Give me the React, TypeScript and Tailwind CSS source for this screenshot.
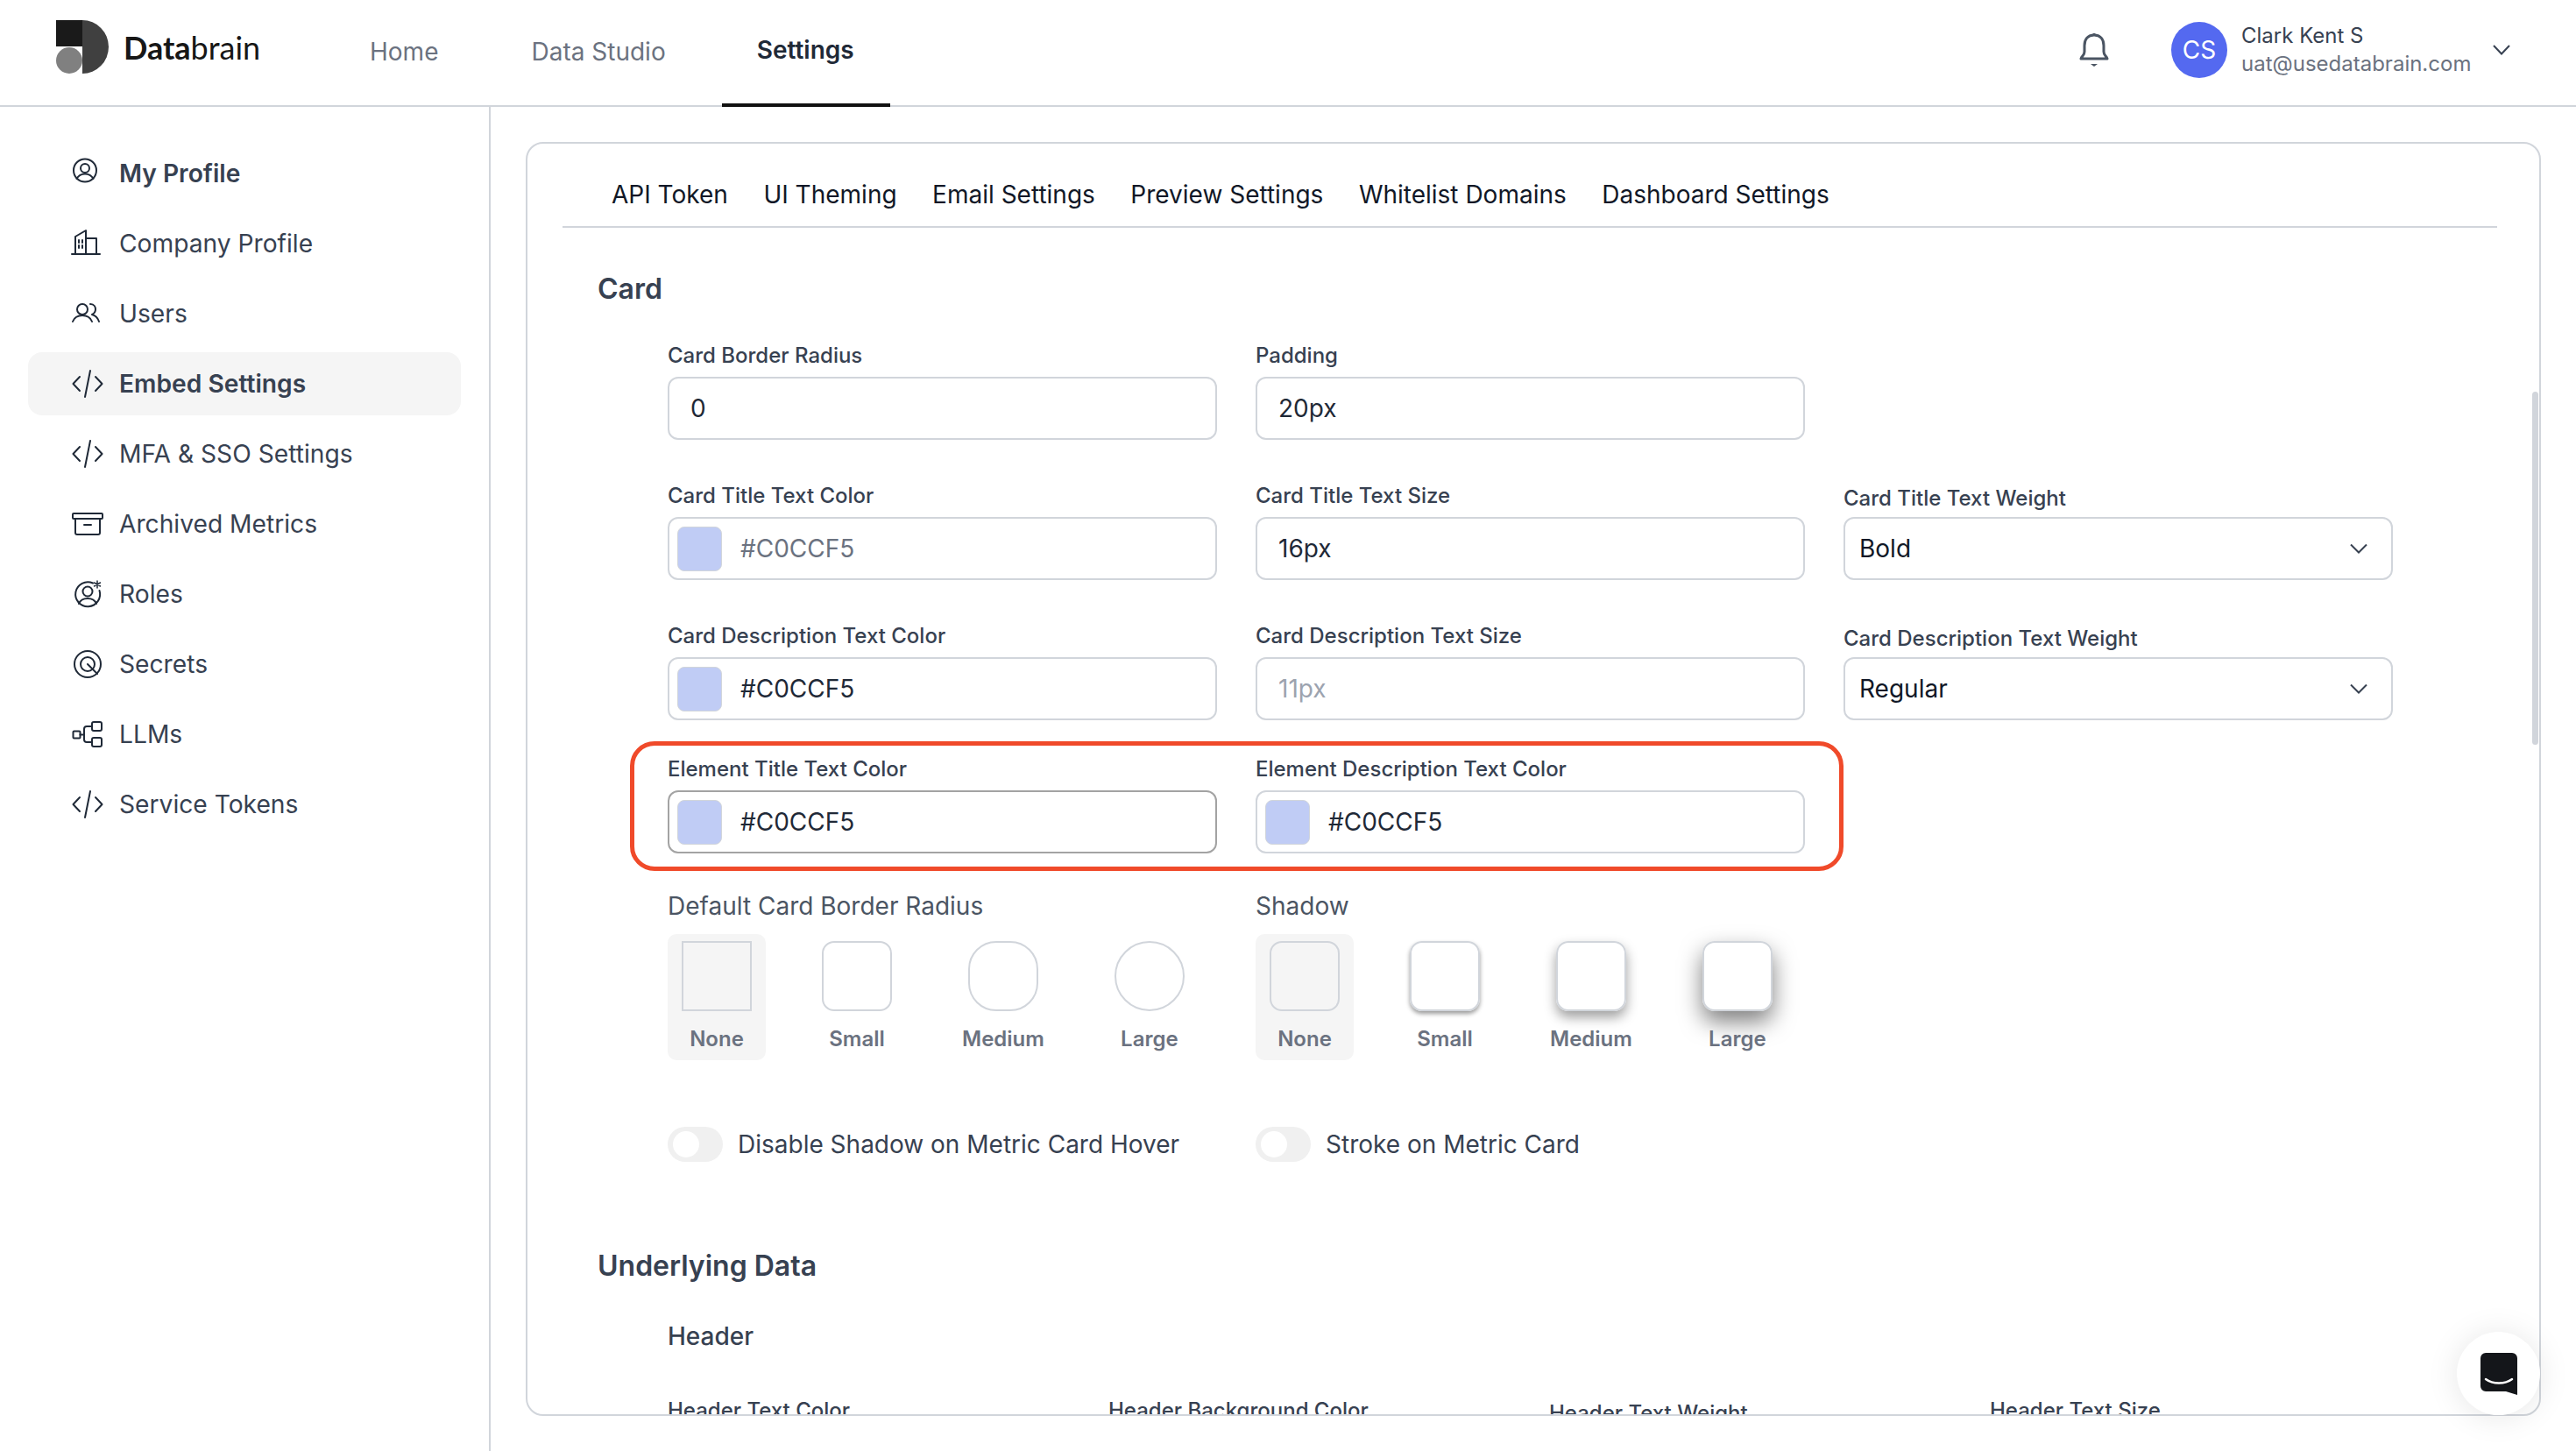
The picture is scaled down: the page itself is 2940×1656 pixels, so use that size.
import type { ReactNode } from 'react';

const iconPaths: Record<string, ReactNode> = {
  profile: (
    <>
      <circle cx="15" cy="12.5" r="13" />
      <circle cx="15" cy="10" r="5" />
      <path d="M5.5 22C8 17.5 11 16.5 15 16.5S22 17.5 24.5 22" />
    </>
  ),
  company: (
    <>
      <path d="M0 28H32M4 28V8L16 1V28M16 10H28V28" />
      <path d="M8 12v3M12 12v3M8 18v3M12 18v3" />
    </>
  ),
  users: (
    <>
      <circle cx="12" cy="11" r="6" />
      <path d="M1 25C3 20 7 18 12 18S21 20 23 25" />
      <path d="M21 5C26 5 27 9 27 11C27 14 25 16 23 17C27 18 30 22 31 25" />
    </>
  ),
  code: <path d="M9 8L1.5 16L9 24M27 8L34.5 16L27 24M21 1L15 31" />,
  archive: (
    <>
      <rect x="1" y="4" width="34" height="6" rx="1" />
      <path d="M4 10V26a2 2 0 0 0 2 2H30a2 2 0 0 0 2-2V10M14 17H22" />
    </>
  ),
  roles: (
    <>
      <path d="M24 3.5A14 14 0 1 0 31.5 12" />
      <circle cx="18" cy="13" r="5.5" />
      <path d="M8 27C10 22 14 21 18 21S26 22 28 27" />
      <path d="M29 1V9M25.5 3L32.5 7M25.5 7L32.5 3" strokeWidth="1.5" />
    </>
  ),
  secrets: (
    <>
      <circle cx="18" cy="16" r="15" />
      <circle cx="18" cy="16" r="8" />
      <path d="M18 16L29 27" />
    </>
  ),
  llms: (
    <>
      <rect x="1.5" y="12.5" width="8" height="8" rx="1" />
      <rect x="23" y="2" width="11" height="10" rx="2" />
      <rect x="23" y="20" width="11" height="10" rx="2" />
      <path d="M9.5 16.5H14M23 7H17a3 3 0 0 0-3 3V22a3 3 0 0 0 3 3H23" />
    </>
  ),
};

const sidebarItems = [
  { label: 'My Profile', icon: 'profile', bold: true },
  { label: 'Company Profile', icon: 'company' },
  { label: 'Users', icon: 'users' },
  { label: 'Embed Settings', icon: 'code', bold: true, active: true },
  { label: 'MFA & SSO Settings', icon: 'code' },
  { label: 'Archived Metrics', icon: 'archive' },
  { label: 'Roles', icon: 'roles' },
  { label: 'Secrets', icon: 'secrets' },
  { label: 'LLMs', icon: 'llms' },
  { label: 'Service Tokens', icon: 'code' },
];

const settingsTabs = [
  'API Token',
  'UI Theming',
  'Email Settings',
  'Preview Settings',
  'Whitelist Domains',
  'Dashboard Settings',
];

function FieldLabel({ children, low }: { children: ReactNode; low?: boolean }) {
  return (
    <div
      className={`h-[40px] text-[24px] leading-[32px] font-medium text-[#374151] ${low ? 'pt-[3px]' : ''}`}
    >
      {children}
    </div>
  );
}

function TextField({ label, value, muted }: { label: string; value: string; muted?: boolean }) {
  return (
    <div>
      <FieldLabel>{label}</FieldLabel>
      <div
        className={`flex h-[72px] items-center rounded-[12px] border-2 border-[#d1d5db] pl-[24px] text-[28px] ${muted ? 'text-[#9ca3af]' : 'text-[#1f2937]'}`}
      >
        {value}
      </div>
    </div>
  );
}

function ColorField({
  label,
  muted,
  dark,
}: {
  label: string;
  muted?: boolean;
  dark?: boolean;
}) {
  return (
    <div>
      <FieldLabel>{label}</FieldLabel>
      <div
        className={`flex h-[72px] items-center rounded-[12px] border-2 pl-[9px] text-[28px] ${dark ? 'border-[#a3a3a3]' : 'border-[#d1d5db]'} ${muted ? 'text-[#6b7280]' : 'text-[#1f2937]'}`}
      >
        <span className="mr-[21px] h-[51px] w-[51px] rounded-[8px] border border-[#d1d5db] bg-[#c0ccf5]" />
        #C0CCF5
      </div>
    </div>
  );
}

function SelectField({ label, value }: { label: string; value: string }) {
  return (
    <div>
      <FieldLabel low>{label}</FieldLabel>
      <div className="flex h-[72px] items-center justify-between rounded-[12px] border-2 border-[#d1d5db] pr-[27px] pl-[16px] text-[28px] text-[#111827]">
        {value}
        <svg width="20" height="12" viewBox="0 0 20 12" fill="none" stroke="#374151" strokeWidth="2">
          <path d="M1 1.5L10 10.5L19 1.5" />
        </svg>
      </div>
    </div>
  );
}

const radiusOptions = [
  { label: 'None', box: 'rounded-none bg-[#f5f5f5]', selected: true },
  { label: 'Small', box: 'rounded-[14px]' },
  { label: 'Medium', box: 'rounded-[32px]' },
  { label: 'Large', box: 'rounded-full' },
];

const shadowOptions = [
  { label: 'None', box: 'rounded-[14px] bg-[#f5f5f5]', selected: true },
  { label: 'Small', box: 'rounded-[14px] shadow-[0_3px_5px_rgba(0,0,0,0.4)]' },
  { label: 'Medium', box: 'rounded-[14px] shadow-[0_7px_14px_rgba(0,0,0,0.38)]' },
  { label: 'Large', box: 'rounded-[14px] shadow-[0_12px_26px_rgba(0,0,0,0.5)]' },
];

function OptionGroup({
  title,
  options,
}: {
  title: string;
  options: { label: string; box: string; selected?: boolean }[];
}) {
  return (
    <div>
      <div className="text-[28px] leading-[36px] text-[#4b5563]">{title}</div>
      <div className="mt-[14px] flex gap-[48px]">
        {options.map((o) => (
          <div
            key={o.label}
            className={`flex h-[144px] flex-col items-center rounded-[10px] px-[16px] pt-[8px] ${o.selected ? 'bg-[#f5f5f5]' : ''}`}
          >
            <div className={`h-[80px] w-[80px] border-2 border-[#d1d5db] ${o.box}`} />
            <div className="mt-[16px] text-[24px] leading-[32px] font-semibold text-[#6b7280]">
              {o.label}
            </div>
          </div>
        ))}
      </div>
    </div>
  );
}

function Toggle({ label }: { label: string }) {
  return (
    <div className="flex items-center gap-[17px]">
      <div className="flex h-[40px] w-[63px] items-center rounded-full bg-[#f0f0f0] pl-[6px]">
        <div className="h-[30px] w-[30px] rounded-full bg-white" />
      </div>
      <span className="text-[28px] text-[#374151]">{label}</span>
    </div>
  );
}

export default function App() {
  return (
    <div className="h-[1656px] w-[2940px] overflow-hidden bg-white font-['Inter',sans-serif]">
      <header className="flex h-[122px] items-start border-b-2 border-[#d1d5db]">
        <svg className="mt-[23px] ml-[64px]" width="60" height="61" viewBox="0 0 60 61">
          <path d="M30 0A30 30.5 0 0 1 30 61Z" fill="#404040" />
          <rect width="30" height="30" fill="#1a1a1a" />
          <circle cx="15" cy="46" r="15" fill="#808080" />
        </svg>
        <div className="mt-[31px] ml-[17px] w-[241px] font-['Lato',sans-serif] text-[36px] leading-[46px] text-[#171717]">
          <span className="font-bold">Data</span>brain
        </div>
        <nav className="flex text-[28px]">
          <a className="mr-[26px] flex h-[116px] items-center px-[40px] pt-[2px] text-[#6b7280]">Home</a>
          <a className="mr-[24px] flex h-[116px] items-center px-[40px] pt-[2px] text-[#6b7280]">Data Studio</a>
          <a className="flex h-[122px] items-center border-b-4 border-[#111111] pr-[41px] pb-[5px] pl-[40px] font-semibold text-[#1f2937]">
            Settings
          </a>
        </nav>
        <div className="ml-auto flex h-[120px] items-center pr-[75px] pb-[6px]">
          <svg width="34" height="40" viewBox="0 0 34 40" fill="none" stroke="#4b5563" strokeWidth="3">
            <path d="M17 1V3M17 3C9 3 6 9 6 15V22C6 26 3 27 2 30H32C31 27 28 26 28 22V15C28 9 25 3 17 3Z" strokeLinejoin="round" />
            <path d="M13 36H21L17 39Z" fill="#4b5563" stroke="none" />
          </svg>
          <div className="mr-[16px] ml-[71px] flex h-[64px] w-[64px] items-center justify-center rounded-full bg-[#5469f0] text-[28px] text-white">
            CS
          </div>
          <div className="w-[266px]">
            <div className="text-[24px] leading-[32px] text-[#374151]">Clark Kent S</div>
            <div className="text-[24px] leading-[32px] text-[#6b7280]">uat@usedatabrain.com</div>
          </div>
          <svg className="ml-[21px]" width="20" height="12" viewBox="0 0 20 12" fill="none" stroke="#374151" strokeWidth="2">
            <path d="M1 1L10 10.5L19 1" />
          </svg>
        </div>
      </header>

      <div className="flex h-[1534px]">
        <aside className="w-[560px] shrink-0 border-r-2 border-[#d1d5db] pt-[40px] pl-[32px]">
          <div className="flex flex-col gap-[8px]">
            {sidebarItems.map((item) => (
              <div
                key={item.label}
                className={`flex h-[72px] w-[494px] items-center gap-[18px] rounded-[16px] pl-[50px] text-[28.2px] text-[#374151] ${item.active ? 'bg-[#f5f5f5]' : ''} ${item.bold ? 'font-semibold' : ''}`}
              >
                <svg
                  className="overflow-visible"
                  width="36"
                  height="32"
                  viewBox="0 0 36 32"
                  fill="none"
                  stroke="#1f2937"
                  strokeWidth="2"
                  strokeLinecap="round"
                  strokeLinejoin="round"
                >
                  {iconPaths[item.icon]}
                </svg>
                {item.label}
              </div>
            ))}
          </div>
        </aside>

        <main className="relative flex-1 pt-[40px] pl-[40px]">
          <div className="relative h-[1454px] w-[2300px] overflow-hidden rounded-[20px] border-2 border-[#d1d5db]">
            <div className="mr-[48px] ml-[40px] flex gap-[40.5px] border-b-2 border-[#d1d5db] pt-[38px] pb-[16px] pl-[56px] text-[28px] leading-[40px] text-[#111827]">
              {settingsTabs.map((t) => (
                <span key={t}>{t}</span>
              ))}
            </div>

            <section className="pl-[80px]">
              <h2 className="mt-[50px] text-[32px] leading-[40px] font-semibold text-[#374151]">Card</h2>
              <div className="mt-[40px] pl-[80px]">
                <div className="grid grid-cols-[repeat(3,627px)] gap-x-[44px] gap-y-[48px]">
                  <TextField label="Card Border Radius" value="0" />
                  <TextField label="Padding" value="20px" />
                  <div />
                  <ColorField label="Card Title Text Color" muted />
                  <TextField label="Card Title Text Size" value="16px" />
                  <SelectField label="Card Title Text Weight" value="Bold" />
                  <ColorField label="Card Description Text Color" />
                  <TextField label="Card Description Text Size" value="11px" muted />
                  <SelectField label="Card Description Text Weight" value="Regular" />
                </div>

                <div className="mt-[24px] -ml-[43px] w-[1385px] rounded-[28px] border-[5px] border-[#f04a2a] pt-[11px] pr-[38px] pb-[15px] pl-[38px]">
                  <div className="grid grid-cols-[repeat(2,627px)] gap-x-[44px]">
                    <ColorField label="Element Title Text Color" dark />
                    <ColorField label="Element Description Text Color" />
                  </div>
                </div>

                <div className="mt-[22px] grid grid-cols-[repeat(2,627px)] gap-x-[44px]">
                  <OptionGroup title="Default Card Border Radius" options={radiusOptions} />
                  <OptionGroup title="Shadow" options={shadowOptions} />
                </div>

                <div className="mt-[75px] grid grid-cols-[repeat(2,627px)] gap-x-[44px]">
                  <Toggle label="Disable Shadow on Metric Card Hover" />
                  <Toggle label="Stroke on Metric Card" />
                </div>
              </div>

              <h2 className="mt-[98px] text-[32px] leading-[40px] font-semibold text-[#374151]">Underlying Data</h2>
              <div className="pl-[80px]">
                <h3 className="mt-[40px] text-[28px] leading-[40px] font-medium text-[#374151]">Header</h3>
                <div className="mt-[49px] grid grid-cols-[repeat(4,503px)] text-[24px] leading-[32px] font-medium text-[#374151]">
                  <span>Header Text Color</span>
                  <span>Header Background Color</span>
                  <span className="pt-[3px]">Header Text Weight</span>
                  <span>Header Text Size</span>
                </div>
              </div>
            </section>

            <div className="absolute top-[283px] right-[1px] h-[403px] w-[7px] rounded-full bg-[#d1d5db]" />
          </div>

          <div className="absolute right-[41px] bottom-[41px] flex h-[95px] w-[95px] items-center justify-center rounded-full bg-white shadow-[0_2px_36px_rgba(0,0,0,0.1)]">
            <svg width="42" height="48" viewBox="0 0 42 48">
              <path d="M6 0H36a6 6 0 0 1 6 6V48L29 44H6a6 6 0 0 1-6-6V6a6 6 0 0 1 6-6Z" fill="#14161a" />
              <path d="M6 30C14 36 28 36 36 30" fill="none" stroke="#ffffff" strokeWidth="2.5" strokeLinecap="round" />
            </svg>
          </div>
        </main>
      </div>
    </div>
  );
}
